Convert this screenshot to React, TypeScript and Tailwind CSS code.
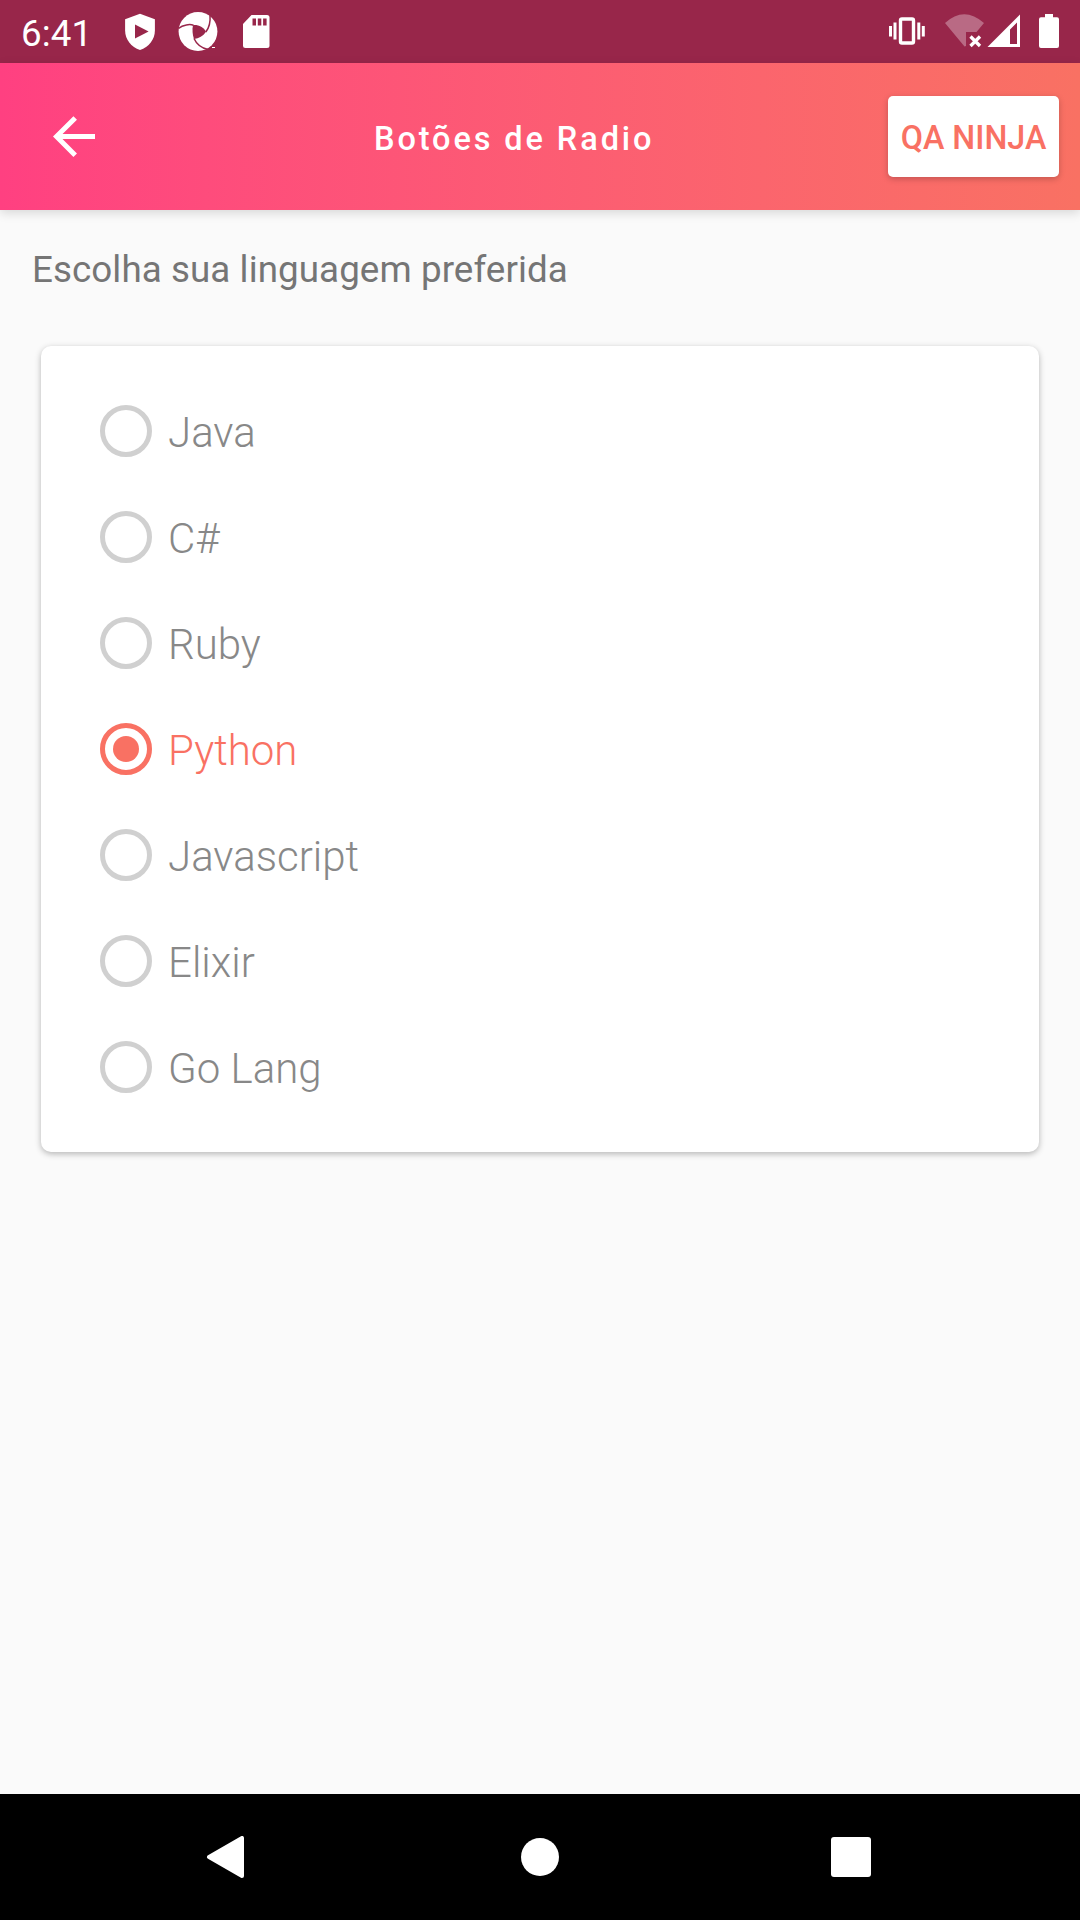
const languages = ["Java", "C#", "Ruby", "Python", "Javascript", "Elixir", "Go Lang"];

function NotificationIcons() {
  return (
    <svg className="ml-9 h-[63px] w-[150px]" viewBox="123 0 150 63" fill="#fff">
      <path d="M140 13.7 154.9 19.3V30.5C154.9 39.5 148.8 47 140 50 131.2 47 125.1 39.5 125.1 30.5V19.3Z" />
      <path d="M135 24.6V38.4L148.6 31.5Z" fill="#98264a" />
      <circle cx="198" cy="31.5" r="19.4" />
      <g fill="none" stroke="#98264a" strokeWidth="1.5">
        <path d="M178.500 28.500C183 24.500 190 24 193.500 25.200" />
        <path d="M210 15C210.500 21 209 28 205.800 32" />
        <path d="M194 38.500C196.500 44 201 48 208 49.500" />
      </g>
      <path d="M193 25.200C198 24.500 203.500 27 206 31.700 203 36 199 38.500 194 39 192.500 35 192 29 193 25.200Z" fill="#98264a" />
      <path d="M212 47h3v1h-3z" />
      <path d="M251.500 15H267Q269.500 15 269.500 17.500V45.500Q269.500 48 267 48H245.500Q243 48 243 45.500V24Z" />
      <path d="M252.500 18.500h3.500v7h-3.500zM257.800 18.500h3.500v7h-3.500zM263.100 18.500h3.500v7h-3.500z" fill="#98264a" />
    </svg>
  );
}

function SystemIcons() {
  return (
    <svg className="ml-auto h-[63px] w-[195px]" viewBox="885 0 195 63" fill="#fff">
      <path d="M889 26h3v10.500h-3zM893.500 22.500h3v17h-3zM917.300 22.500h3v17h-3zM921.800 26h3v10.500h-3z" />
      <rect x="900.500" y="19" width="13" height="24" rx="1.500" fill="none" stroke="#fff" strokeWidth="3.400" />
      <path d="M945 23Q964 5.500 984 23L976.500 32H966V46L964.500 46.500Z" fill="#b96a84" />
      <path d="m970.500 36.500 9.500 9.500m0-9.500-9.500 9.500" stroke="#fff" strokeWidth="3.300" />
      <path fillRule="evenodd" d="M1020 14.500V47H987.500ZM1017 22.500 1010 29.500V44H1017Z" />
      <path d="M1045 14h8v3.200h4q2 0 2 2V46q0 2-2 2h-16q-2 0-2-2V19.200q0-2 2-2h4Z" />
    </svg>
  );
}

function Radio({ selected }: { selected: boolean }) {
  return (
    <span
      className={
        "flex size-[52px] items-center justify-center rounded-full border-[5px] " +
        (selected ? "border-[#f97163]" : "border-[#d0d0d0]")
      }
    >
      {selected && <span className="size-[26px] rounded-full bg-[#f97163]" />}
    </span>
  );
}

export default function App() {
  return (
    <div className="flex h-[1920px] w-[1080px] flex-col overflow-hidden bg-[#fafafa] font-[Roboto,sans-serif]">
      <div className="flex h-[63px] shrink-0 items-center bg-[#98264a] pl-[21px]">
        <span className="w-[66px] pt-[5px] text-[36.75px] leading-none tracking-[0.1px] whitespace-nowrap text-white">6:41</span>
        <NotificationIcons />
        <SystemIcons />
      </div>

      <header className="flex h-[147px] shrink-0 items-center bg-linear-to-r from-[#ff4081] to-[#f97163] pr-[21px] shadow-[0_3px_10px_rgba(0,0,0,0.14)]">
        <button className="ml-[52.5px] flex h-[42px] w-[42px] items-center" aria-label="Voltar">
          <svg className="size-[42px]" viewBox="0 0 42 42" fill="none" stroke="#fff" strokeWidth="5">
            <path d="M22.200 2 3.500 20.500 22.200 39.200M4 20.500H42" />
          </svg>
        </button>
        <h1 className="ml-[279.5px] pt-[5px] text-[32.5px] leading-none font-medium tracking-[2.9px] whitespace-nowrap text-white">
          Botões de Radio
        </h1>
        <button className="ml-auto flex h-[81px] w-[171px] items-center justify-center rounded-[5px] bg-white pt-[4px] text-[32.3px] leading-none font-medium whitespace-nowrap text-[#f97163] shadow-[0_2px_6px_rgba(0,0,0,0.22)]">
          QA NINJA
        </button>
      </header>

      <main className="flex-1 px-[41px] pt-[37px]">
        <p className="-ml-[9px] h-[99px] text-[36.75px] leading-[46px] tracking-[0.08px] text-[#757575]">Escolha sua linguagem preferida</p>
        <div className="flex h-[806px] flex-col rounded-[10px] bg-white pt-[32px] pl-[59px] shadow-[0_2px_6px_rgba(0,0,0,0.28)]">
          {languages.map((name) => {
            const selected = name === "Python";
            return (
              <div key={name} className="flex h-[106px] items-center">
                <Radio selected={selected} />
                <span
                  className={
                    "ml-4 pt-[3px] text-[42px] leading-none font-light " +
                    (selected ? "text-[#f97163]" : "text-[#888888]")
                  }
                >
                  {name}
                </span>
              </div>
            );
          })}
        </div>
      </main>

      <nav className="flex h-[126px] shrink-0 items-center bg-black pl-[206px]">
        <svg className="size-[42px]" viewBox="0 0 42 42" fill="#fff" stroke="#fff" strokeWidth="4" strokeLinejoin="round">
          <path d="M3 21 36 2V40Z" />
        </svg>
        <span className="ml-[273px] size-[38px] rounded-full bg-white" />
        <span className="ml-[272px] size-[40px] rounded-[3px] bg-white" />
      </nav>
    </div>
  );
}
